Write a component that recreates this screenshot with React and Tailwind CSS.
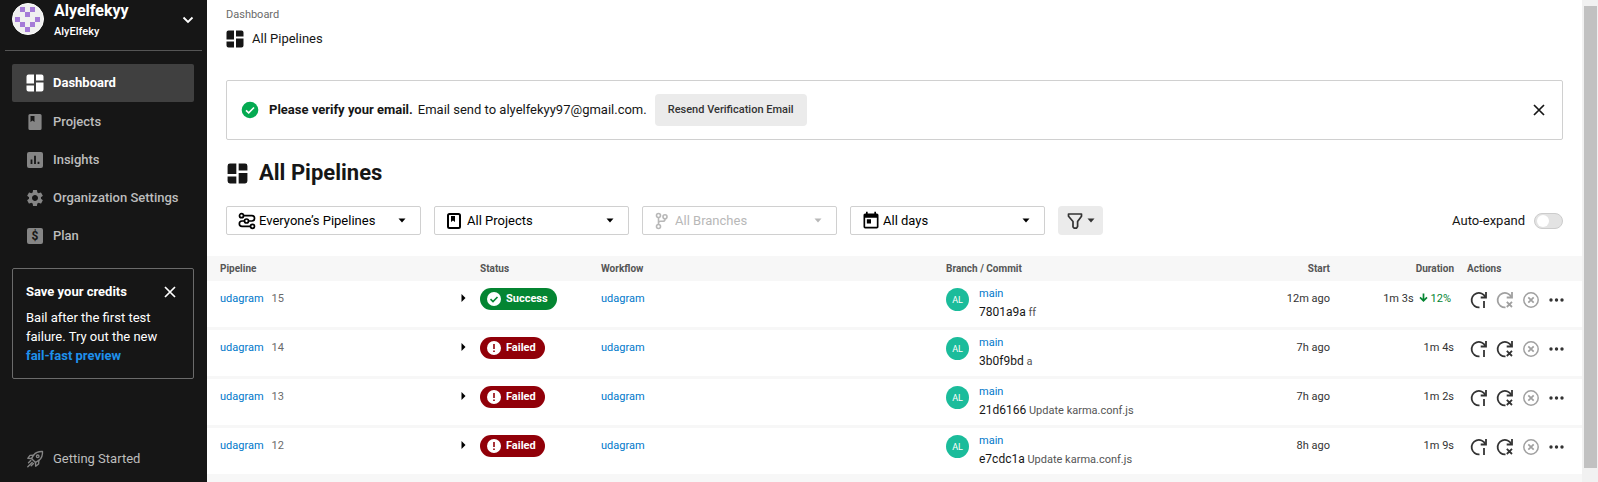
import React from "react";
import { MdSettings, MdToday } from "react-icons/md";

function DashboardIcon({ className }) {
  return (
    <svg viewBox="0 0 18 18" className={className} fill="currentColor" aria-hidden="true">
      <path d="M2.500 0.500H8v9H0.500v-7a2 2 0 0 1 2-2zM10 0.500h5.500a2 2 0 0 1 2 2V6.500H10zM0.500 11.500H8v6H2.500a2 2 0 0 1-2-2zM10 8.500h7.500v7a2 2 0 0 1-2 2H10z" />
    </svg>
  );
}

function ProjectIcon({ className }) {
  return (
    <svg viewBox="0 0 16 18" className={className} fill="currentColor" aria-hidden="true">
      <path fillRule="evenodd" d="M3 1h10a1.600 1.600 0 0 1 1.600 1.600v12.800A1.600 1.600 0 0 1 13 17H3a1.600 1.600 0 0 1-1.600-1.600V2.600A1.600 1.600 0 0 1 3 1zM3.500 3v6l2-1.400 2 1.400V3z" />
    </svg>
  );
}

function ProjectOutlineIcon({ className }) {
  return (
    <svg viewBox="0 0 16 18" className={className} aria-hidden="true">
      <rect x="2" y="2" width="12" height="14" rx="1.500" fill="none" stroke="currentColor" strokeWidth="2" />
      <path d="M5 4h4v6L7 8.500 5 10z" fill="currentColor" />
    </svg>
  );
}

function InsightsIcon({ className }) {
  return (
    <svg viewBox="0 0 18 18" className={className} aria-hidden="true">
      <rect x="1" y="1" width="16" height="16" rx="2" fill="currentColor" />
      <path d="M5.500 8.500V13M9 4.800V13M12.500 10.800V13" stroke="#161616" strokeWidth="1.800" />
    </svg>
  );
}

function SettingsIcon({ className }) {
  return (
    <span className={className}>
      <MdSettings className="-m-px size-5" aria-hidden="true" />
    </span>
  );
}

function PlanIcon({ className }) {
  return (
    <svg viewBox="0 0 18 18" className={className} aria-hidden="true">
      <rect x="1" y="1" width="16" height="16" rx="2" fill="currentColor" />
      <text x="9" y="13.200" textAnchor="middle" fontSize="12" fontWeight="700" fill="#161616">$</text>
    </svg>
  );
}

function RocketIcon({ className }) {
  return (
    <svg viewBox="0 0 18 18" className={className} fill="none" stroke="currentColor" strokeWidth="1.400" strokeLinecap="round" strokeLinejoin="round" aria-hidden="true">
      <path d="M16.500 1.500c-4-.2-6.800.9-8.700 3.400L5.500 8.500l4 4 3.600-2.300c2.500-1.900 3.600-4.700 3.400-8.700z" />
      <path d="M7.600 5.200 4 5.400 1.800 8.300l3.700.2M12.800 10.400l-.2 3.600-2.900 2.200-.2-3.700" />
      <path d="M4.800 10.500l-2.300 2.300M6.200 12.400l-4.400 4.400M7.500 13.500l-2.300 2.300" />
      <circle cx="11.700" cy="6.300" r="1.300" />
    </svg>
  );
}

function CrossIcon({ className }) {
  return (
    <svg viewBox="0 0 12 12" className={className} fill="none" stroke="currentColor" strokeWidth="1.700" aria-hidden="true">
      <path d="M1 1l10 10M11 1L1 11" />
    </svg>
  );
}

function PipelineIcon({ className }) {
  return (
    <svg viewBox="0 0 18 18" className={className} fill="none" stroke="currentColor" strokeWidth="1.700" aria-hidden="true">
      <circle cx="3.500" cy="3.700" r="2" />
      <circle cx="8.500" cy="9" r="2" />
      <circle cx="14.500" cy="14.300" r="2" />
      <path d="M5.500 3.700h8.400a2.650 2.650 0 0 1 0 5.300h-3.400M6.500 9H4a2.650 2.650 0 0 0 0 5.300h8.500" />
    </svg>
  );
}

function BranchIcon({ className }) {
  return (
    <svg viewBox="0 0 14 18" className={className} fill="none" stroke="currentColor" strokeWidth="1.600" aria-hidden="true">
      <circle cx="4.500" cy="3.500" r="2" />
      <circle cx="4.500" cy="14.500" r="2" />
      <circle cx="11" cy="4.700" r="2" />
      <path d="M4.500 5.500v7M11 6.700v.6a2 2 0 0 1-2 2H6.500a2 2 0 0 0-2 2" />
    </svg>
  );
}

function FunnelIcon({ className }) {
  return (
    <svg viewBox="0 0 16 18" className={className} fill="none" stroke="currentColor" strokeWidth="1.700" strokeLinejoin="round" aria-hidden="true">
      <path d="M1.500 2h13v2.200L10.600 9.500v5l-1.200 1.700H7.200L6 15V9.500L1.500 4.200z" />
    </svg>
  );
}

function Caret({ className }) {
  return (
    <svg viewBox="0 0 8 5" className={className} fill="currentColor" aria-hidden="true">
      <path d="M0.500 0.500h7L4 4.500z" />
    </svg>
  );
}

function RerunIcon({ failed }) {
  return (
    <svg viewBox="0 0 18 18" className="size-[18px]" fill="none" stroke="currentColor" strokeWidth="1.800" aria-hidden="true">
      <path d="M9.500 16.300A7.200 7.200 0 1 1 15.300 6" />
      <path d="M16 1v5.500h-5.300" />
      {failed ? <path d="M10.800 10.800l5.200 5.200M16 10.800L10.800 16" /> : <path d="M14 10v7" />}
    </svg>
  );
}

function CancelIcon() {
  return (
    <svg viewBox="0 0 18 18" className="size-[18px]" fill="none" stroke="currentColor" strokeWidth="1.500" aria-hidden="true">
      <circle cx="9" cy="9" r="7.200" />
      <path d="M6.300 6.300l5.400 5.400M11.700 6.300l-5.400 5.400" strokeWidth="1.700" />
    </svg>
  );
}

function MoreIcon() {
  return (
    <svg viewBox="0 0 18 18" className="size-[18px]" fill="currentColor" aria-hidden="true">
      <circle cx="3" cy="9" r="1.700" />
      <circle cx="8.500" cy="9" r="1.700" />
      <circle cx="14" cy="9" r="1.700" />
    </svg>
  );
}

const AVATAR_CELLS = [
  [1, 0], [3, 0], [2, 1], [0, 2], [4, 2], [1, 3], [3, 3], [2, 4],
];

function Avatar() {
  return (
    <svg viewBox="0 0 32 32" className="size-8 shrink-0" aria-hidden="true">
      <circle cx="16" cy="16" r="15.500" fill="#f0f0f0" stroke="#fff" />
      {AVATAR_CELLS.map(([x, y]) => (
        <rect key={`${x}-${y}`} x={3 + x * 5} y={4 + y * 5} width="5" height="5" fill="#a57bd8" />
      ))}
    </svg>
  );
}

const NAV = [
  { label: "Projects", icon: ProjectIcon },
  { label: "Insights", icon: InsightsIcon },
  { label: "Organization Settings", icon: SettingsIcon },
  { label: "Plan", icon: PlanIcon },
];

function Sidebar() {
  return (
    <aside className="flex w-[207px] shrink-0 flex-col bg-[#161616] text-white">
      <button type="button" className="mx-[5px] flex h-[51px] items-start gap-[10px] border-b border-[#555] pr-2 pl-[7px] pt-[3px] text-left">
        <Avatar />
        <span className="flex grow flex-col">
          <span className="-mt-[2px] text-base leading-5 font-bold">Alyelfekyy</span>
          <span className="pt-[3px] text-[11px] leading-4 font-medium">AlyElfeky</span>
        </span>
        <svg viewBox="0 0 12 8" className="mt-[13px] h-2 w-3" fill="none" stroke="currentColor" strokeWidth="1.800" aria-hidden="true">
          <path d="M1.500 1.500L6 6l4.500-4.500" />
        </svg>
      </button>
      <nav className="mt-[13px] flex flex-col pr-[13px] pl-3 text-[13px]">
        <a href="#dashboard" className="mb-px flex h-[38px] items-center gap-[9px] rounded-xs bg-[#404040] pl-[14px] pr-2 font-bold">
          <DashboardIcon className="size-[18px]" />
          Dashboard
        </a>
        {NAV.map(({ label, icon: Icon }) => (
          <a key={label} href="#nav" className="flex h-[38px] items-center gap-[9px] pl-[14px] font-medium whitespace-nowrap text-[#bdbdbd]">
            <Icon className="size-[18px] shrink-0 text-[#858585]" />
            {label}
          </a>
        ))}
      </nav>
      <section className="mr-[13px] ml-3 mt-[13px] rounded-xs border border-[#6b6b6b] p-[13px] text-[13px] leading-[19px]">
        <div className="flex items-center justify-between pr-1">
          <h2 className="font-bold">Save your credits</h2>
          <button type="button" aria-label="Dismiss">
            <CrossIcon className="size-3" />
          </button>
        </div>
        <p className="mt-[7px]">
          Bail after the first test failure. Try out the new{" "}
          <a href="#preview" className="font-bold text-[#1e90ec]">fail-fast preview</a>
        </p>
      </section>
      <a href="#start" className="mt-auto mb-[13px] flex items-center gap-[9px] pl-[26px] text-[13px] leading-5 text-[#bdbdbd]">
        <RocketIcon className="size-[18px] text-[#858585]" />
        Getting Started
      </a>
    </aside>
  );
}

function FilterSelect({ label, value, icon, disabled }) {
  return (
    <div className={`grid h-[29px] w-[195px] items-center rounded-xs border border-[#d0d0d0] ${disabled ? "text-[#b8b8b8]" : "text-black"}`}>
      <select
        aria-label={label}
        disabled={disabled}
        className="col-start-1 row-start-1 h-full w-full appearance-none bg-transparent pr-6 pl-8 text-[13px] opacity-100"
      >
        <option>{value}</option>
      </select>
      <span className="pointer-events-none col-start-1 row-start-1 flex items-center justify-between pr-[14px] pl-[11px]">
        {icon}
        <Caret className="h-[5px] w-2" />
      </span>
    </div>
  );
}

const ROWS = [
  { number: 15, ok: true, hash: "7801a9a", message: "ff", start: "12m ago", duration: "1m 3s", trend: "12%" },
  { number: 14, ok: false, hash: "3b0f9bd", message: "a", start: "7h ago", duration: "1m 4s" },
  { number: 13, ok: false, hash: "21d6166", message: "Update karma.conf.js", start: "7h ago", duration: "1m 2s" },
  { number: 12, ok: false, hash: "e7cdc1a", message: "Update karma.conf.js", start: "8h ago", duration: "1m 9s" },
];

function StatusPill({ ok }) {
  return (
    <span className={`flex h-[22px] w-fit items-center gap-[5px] rounded-full pr-[9px] pl-[7px] text-[11px] font-bold text-white ${ok ? "bg-[#048532]" : "bg-[#910009]"}`}>
      <svg viewBox="0 0 14 14" className="size-[14px]" aria-hidden="true">
        <circle cx="7" cy="7" r="7" fill="#fff" />
        {ok ? (
          <path d="M3.500 7.200l2.500 2.400 4.500-4.600" fill="none" stroke="#048532" strokeWidth="1.600" />
        ) : (
          <path d="M7 3v5M7 9.500v1.600" fill="none" stroke="#910009" strokeWidth="1.600" />
        )}
      </svg>
      {ok ? "Success" : "Failed"}
    </span>
  );
}

function PipelineRow({ row }) {
  return (
    <tr className="h-[49px] align-top *:border-b-3 *:border-[#f7f7f7]">
      <td className="pt-[10px] pl-[13px]">
        <a href="#pipeline" className="text-[#0078ca]">udagram</a>
        <span className="ml-2 text-[#6a6a6a]">{row.number}</span>
      </td>
      <td className="pt-[13px]">
        <button type="button" aria-label="Expand row" className="block">
          <svg viewBox="0 0 5 8" className="h-2 w-[5px]" aria-hidden="true">
            <path d="M0.500 0L4.500 4 0.500 8z" />
          </svg>
        </button>
      </td>
      <td className="pt-[7px]">
        <StatusPill ok={row.ok} />
      </td>
      <td className="pt-[10px]">
        <a href="#workflow" className="text-[#0078ca]">udagram</a>
      </td>
      <td className="pt-1">
        <div className="flex gap-[10px]">
          <span className="mt-[3px] flex size-[23px] shrink-0 items-center justify-center rounded-full bg-[#1bbc9b] text-[9px] text-white">AL</span>
          <div className="leading-[18px]">
            <a href="#branch" className="block text-[#0078ca]">main</a>
            <a href="#commit" className="text-xs leading-[18px] text-[#161616]">{row.hash}</a>{" "}
            <span className="text-[#555]">{row.message}</span>
          </div>
        </div>
      </td>
      <td className="pt-[10px] text-right">{row.start}</td>
      <td className="pt-[10px] text-right">
        {row.duration}
        {row.trend && (
          <span className="mr-[3px] ml-[5px] text-[#048532]">
            <svg viewBox="0 0 9 9" className="mr-[3px] inline-block size-[9px] align-baseline" fill="none" stroke="currentColor" strokeWidth="1.700" aria-hidden="true">
              <path d="M4.500 0.500v7M1 4.300l3.500 3.500L8 4.300" />
            </svg>
            {row.trend}
          </span>
        )}
      </td>
      <td className="pt-[10px] pl-[16px]">
        <div className="flex gap-2 text-[#333]">
          <button type="button" aria-label="Rerun from start"><RerunIcon /></button>
          <button type="button" aria-label="Rerun from failed" disabled={row.ok} className="disabled:text-[#a0a0a0]"><RerunIcon failed /></button>
          <button type="button" aria-label="Cancel" disabled className="text-[#a0a0a0]"><CancelIcon /></button>
          <button type="button" aria-label="More actions"><MoreIcon /></button>
        </div>
      </td>
    </tr>
  );
}

function PipelineTable() {
  return (
    <table className="mt-[21px] w-full table-fixed border-separate border-spacing-0 text-[11px] leading-4 text-[#333]">
      <colgroup>
        <col className="w-[254px]" />
        <col className="w-[19px]" />
        <col className="w-[121px]" />
        <col className="w-[345px]" />
        <col />
        <col className="w-[110px]" />
        <col className="w-[124px]" />
        <col className="w-[128px]" />
      </colgroup>
      <thead>
        <tr className="h-[25px] bg-[#f7f7f7] text-left text-[10px] text-[#555]">
          <th scope="col" className="pl-[13px]">Pipeline</th>
          <th aria-hidden="true" />
          <th scope="col">Status</th>
          <th scope="col">Workflow</th>
          <th scope="col">Branch / Commit</th>
          <th scope="col" className="text-right">Start</th>
          <th scope="col" className="text-right">Duration</th>
          <th scope="col" className="pl-[13px]">Actions</th>
        </tr>
      </thead>
      <tbody>
        {ROWS.map((row) => (
          <PipelineRow key={row.number} row={row} />
        ))}
      </tbody>
    </table>
  );
}

export default function App() {
  return (
    <div className="flex min-h-screen bg-white font-[Roboto,sans-serif] text-[#161616]">
      <Sidebar />
      <main className="flex min-w-0 grow flex-col">
        <div className="px-[19px]">
          <header className="pt-[7px]">
            <a href="#dashboard" className="block text-[11px] leading-4 text-[#6a6a6a]">Dashboard</a>
            <div className="mt-[6px] flex items-center gap-2 text-[13px] leading-5">
              <DashboardIcon className="size-[18px]" />
              All Pipelines
            </div>
          </header>
          <div role="status" className="mt-[31px] flex h-[60px] items-center rounded-xs border border-[#d0d0d0] pr-[17px] pl-[14px] text-[13px]">
            <svg viewBox="0 0 18 18" className="size-[18px] shrink-0" aria-hidden="true">
              <circle cx="9" cy="9" r="8.300" fill="#04aa51" />
              <path d="M5 9.300l2.700 2.600L13 6.500" fill="none" stroke="#fff" strokeWidth="1.600" />
            </svg>
            <strong className="ml-[10px]">Please verify your email.</strong>
            <span className="ml-[5px]">Email send to alyelfekyy97@gmail.com.</span>
            <button type="button" className="ml-2 h-8 rounded-sm bg-[#ebebeb] px-[13px] text-[11px] font-medium text-[#333]">Resend Verification Email</button>
            <button type="button" aria-label="Dismiss" className="ml-auto">
              <CrossIcon className="size-3" />
            </button>
          </div>
          <h1 className="mt-[17px] flex items-center gap-[11px] pl-[1px] text-[22px] leading-8 font-bold">
            <DashboardIcon className="size-[21px]" />
            All Pipelines
          </h1>
          <div className="mt-[17px] flex items-center gap-[13px]">
            <FilterSelect label="Owner" value="Everyone’s Pipelines" icon={<PipelineIcon className="size-[18px]" />} />
            <FilterSelect label="Project" value="All Projects" icon={<ProjectOutlineIcon className="h-[18px] w-4" />} />
            <FilterSelect label="Branch" value="All Branches" disabled icon={<BranchIcon className="h-[18px] w-[14px]" />} />
            <FilterSelect label="Date" value="All days" icon={<MdToday className="-ml-px size-5" />} />
            <button type="button" aria-label="Filter" className="flex h-[29px] items-center gap-1 rounded-sm bg-[#ebebeb] pr-2 pl-[9px] text-[#333]">
              <FunnelIcon className="h-[18px] w-4" />
              <Caret className="h-[5px] w-2" />
            </button>
            <label className="ml-auto flex items-center gap-[9px] text-[13px]">
              Auto-expand
              <input
                type="checkbox"
                role="switch"
                className="h-4 w-[29px] appearance-none rounded-full border border-[#ccc] bg-[#e3e3e3] before:mt-px before:ml-[2px] before:block before:size-3 before:rounded-full before:bg-white"
              />
            </label>
          </div>
        </div>
        <PipelineTable />
        <div className="grow bg-[#f7f7f7]" />
      </main>
      <div className="w-4 shrink-0 bg-[#f1f1f1] pt-[6px] pr-px pl-[2px]" aria-hidden="true">
        <div className="h-[462px] bg-[#c1c1c1]" />
      </div>
    </div>
  );
}
